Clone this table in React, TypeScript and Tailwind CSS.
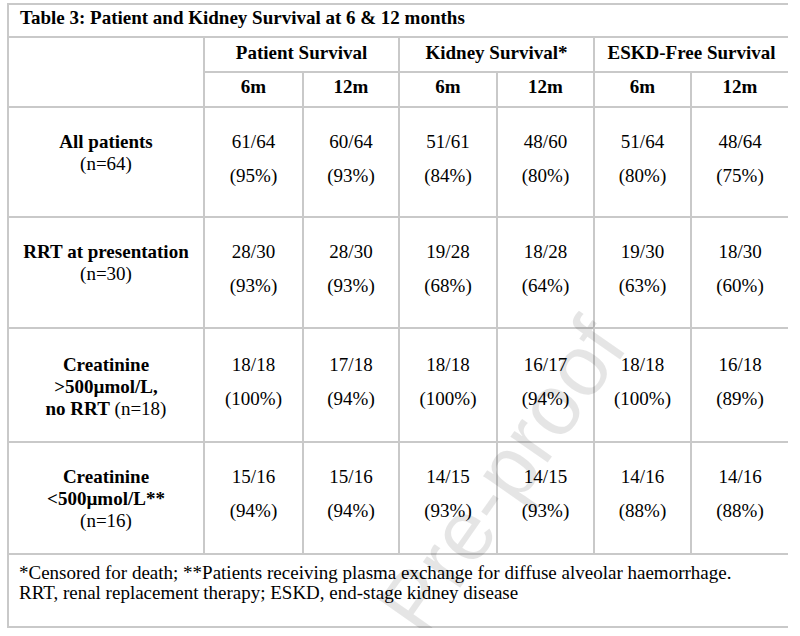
import React from 'react';

type Row = {
  label: React.ReactNode;
  values: [string, string][];
  height: string;
  pad: string;
};

const rows: Row[] = [
  {
    label: (
      <>
        <b>All patients</b>
        <br />
        (n=64)
      </>
    ),
    values: [
      ['61/64', '(95%)'],
      ['60/64', '(93%)'],
      ['51/61', '(84%)'],
      ['48/60', '(80%)'],
      ['51/64', '(80%)'],
      ['48/64', '(75%)'],
    ],
    height: 'h-[110px]',
    pad: 'pt-[23px]',
  },
  {
    label: (
      <>
        <b>RRT at presentation</b>
        <br />
        (n=30)
      </>
    ),
    values: [
      ['28/30', '(93%)'],
      ['28/30', '(93%)'],
      ['19/28', '(68%)'],
      ['18/28', '(64%)'],
      ['19/30', '(63%)'],
      ['18/30', '(60%)'],
    ],
    height: 'h-[111px]',
    pad: 'pt-[23px]',
  },
  {
    label: (
      <>
        <b>Creatinine</b>
        <br />
        <b>&gt;500µmol/L,</b>
        <br />
        <b>no RRT</b> (n=18)
      </>
    ),
    values: [
      ['18/18', '(100%)'],
      ['17/18', '(94%)'],
      ['18/18', '(100%)'],
      ['16/17', '(94%)'],
      ['18/18', '(100%)'],
      ['16/18', '(89%)'],
    ],
    height: 'h-[114px]',
    pad: 'pt-[25px]',
  },
  {
    label: (
      <>
        <b>Creatinine</b>
        <br />
        <b>&lt;500µmol/L**</b>
        <br />
        (n=16)
      </>
    ),
    values: [
      ['15/16', '(94%)'],
      ['15/16', '(94%)'],
      ['14/15', '(93%)'],
      ['14/15', '(93%)'],
      ['14/16', '(88%)'],
      ['14/16', '(88%)'],
    ],
    height: 'h-[112px]',
    pad: 'pt-[23px]',
  },
];

const cell = 'border-2 border-[#c9c9c9] align-top';

export default function App() {
  return (
    <div className="min-h-screen bg-white pl-[7px] pt-[3px] font-[family-name:Liberation_Serif,Times_New_Roman,serif] text-[19px] text-black">
      <div className="relative w-[781px] overflow-hidden">
        <table className="w-full table-fixed border-collapse leading-[21px]">
          <colgroup>
            <col className="w-[196px]" />
            <col className="w-[99px]" />
            <col className="w-[96px]" />
            <col className="w-[98px]" />
            <col className="w-[97px]" />
            <col className="w-[97px]" />
            <col className="w-[98px]" />
          </colgroup>
          <tbody>
            <tr className="h-[33px]">
              <td colSpan={7} className={`${cell} pl-[11px] pt-[2px] font-bold`}>
                Table 3: Patient and Kidney Survival at 6 &amp; 12 months
              </td>
            </tr>
            <tr className="h-[35px]">
              <td rowSpan={2} className={cell}></td>
              <td colSpan={2} className={`${cell} pt-[4px] text-center font-bold`}>
                Patient Survival
              </td>
              <td colSpan={2} className={`${cell} pt-[4px] text-center font-bold`}>
                Kidney Survival*
              </td>
              <td colSpan={2} className={`${cell} pt-[4px] text-center font-bold`}>
                ESKD-Free Survival
              </td>
            </tr>
            <tr className="h-[35px]">
              {['6m', '12m', '6m', '12m', '6m', '12m'].map((m, i) => (
                <td key={i} className={`${cell} pt-[3px] text-center font-bold`}>
                  {m}
                </td>
              ))}
            </tr>
            {rows.map((r, i) => (
              <tr key={i} className={r.height}>
                <td className={`${cell} ${r.pad} text-center leading-[22px]`}>{r.label}</td>
                {r.values.map(([n, pct], j) => (
                  <td key={j} className={`${cell} ${r.pad} text-center`}>
                    <p>{n}</p>
                    <p className="mt-[13px]">{pct}</p>
                  </td>
                ))}
              </tr>
            ))}
            <tr className="h-[73px]">
              <td colSpan={7} className={`${cell} pl-[10px] pt-[8px] leading-[20px]`}>
                *Censored for death; **Patients receiving plasma exchange for diffuse alveolar haemorrhage.
                <br />
                RRT, renal replacement therapy; ESKD, end-stage kidney disease
              </td>
            </tr>
          </tbody>
        </table>

        {/* watermark */}
        <span className="pointer-events-none absolute left-[75px] top-[555px] origin-center -rotate-[55deg] whitespace-nowrap font-[family-name:Liberation_Sans,Arial,sans-serif] text-[86px] leading-none text-black/[0.1]">
          Journal Pre-proof
        </span>
      </div>
    </div>
  );
}
